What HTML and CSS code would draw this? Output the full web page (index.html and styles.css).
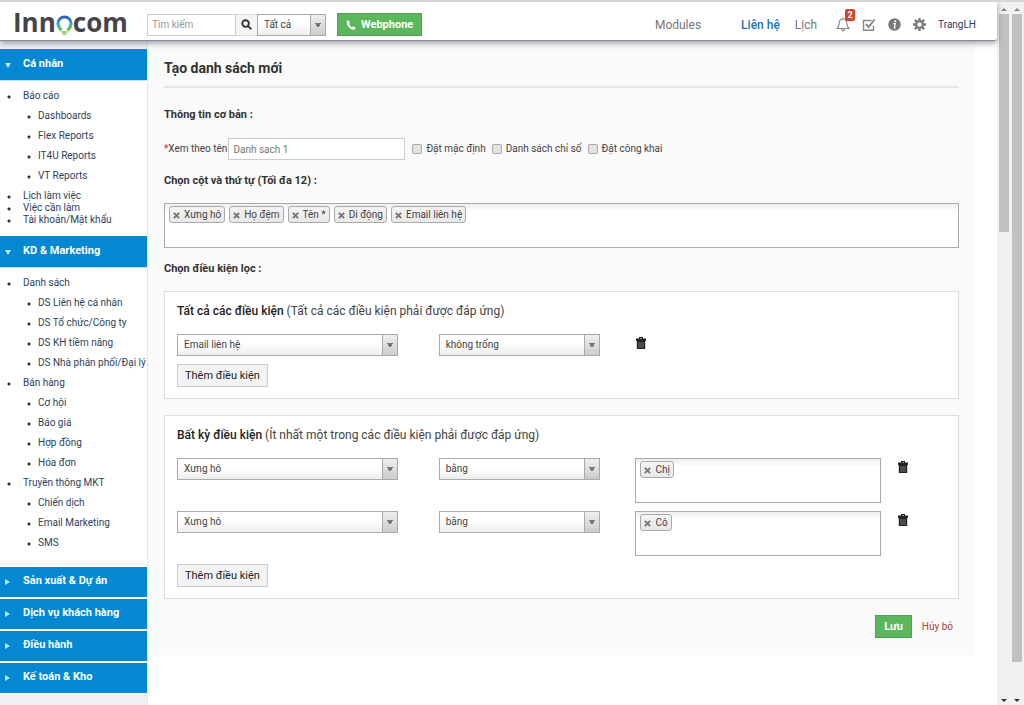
FILE: index.html
```html
<!DOCTYPE html>
<html lang="vi">
<head>
<meta charset="utf-8">
<title>Innocom - Tạo danh sách mới</title>
<link rel="stylesheet" href="styles.css">
</head>
<body>
<svg class="defs" aria-hidden="true">
  <symbol id="trash" viewBox="0 0 10 12"><path fill="#222" d="M3 0h4v1.500h3V4H0V1.500h3zM4 1v.6h2V1zM.8 3.500h8.400V12H.8z"/><path stroke="#999" stroke-width=".7" d="M3 5V11M5 5V11M7 5V11"/></symbol>
  <symbol id="x" viewBox="0 0 8 8"><path stroke="#777" stroke-width="2.300" d="M1 1l6 6M7 1L1 7"/></symbol>
</svg>
<div class="page">
  <header class="top">
    <a class="logo" href="#" aria-label="Innocom"><span>Inn</span><svg width="17" height="20" viewBox="0 0 17 20"><defs><linearGradient id="g" x2="0" y2="1"><stop stop-color="#2a62c4"/><stop offset=".5" stop-color="#39a7cf"/><stop offset="1" stop-color="#75c043"/></linearGradient></defs><path d="M5.500 15.500C4 14 2 12 2 8.500a6.500 6.500 0 0 1 13 0c0 3.500-2 5.500-3.500 7" fill="none" stroke="url(#g)" stroke-width="3"/><path d="M5.500 17h6M6.500 19.200h4" stroke="#75c043" stroke-width="1.300"/></svg><span>com</span></a>
    <form class="search">
      <input class="search-box" type="text" placeholder="Tìm kiếm" aria-label="Tìm kiếm">
      <button class="search-go" type="button" aria-label="Tìm"><svg width="11" height="11" viewBox="0 0 12 12" fill="none" stroke="#333" stroke-width="2"><circle cx="5" cy="5" r="3.600"/><path d="M7.600 7.600l3.600 3.600"/></svg></button>
      <span class="select search-scope"><select aria-label="Phạm vi"><option>Tất cả</option></select></span>
    </form>
    <button class="btn green phone" type="button"><svg width="10" height="10" viewBox="0 0 11 11"><path fill="#fff" d="M2.800.3L1 1.200C-.2 5 5 11.500 9.500 10.500l1.200-1.900-2.900-1.800-1.300 1.100C5.300 7.300 4 5.600 3.500 4.300l1-1.200z"/></svg>Webphone</button>
    <nav class="nav">
      <a class="modules" href="#">Modules</a>
      <a class="current" href="#">Liên hệ</a>
      <a class="calendar" href="#">Lịch</a>
      <button class="icon bell" type="button" aria-label="Thông báo"><svg width="14" height="15" viewBox="0 0 14 15" fill="none" stroke="#888" stroke-width="1.200"><path d="M1 11.500c2-1.500 2-3.500 2.300-6C3.500 3 5 2 7 2s3.500 1 3.700 3.500c.3 2.500.3 4.500 2.300 6zM7 2V.5M5.500 12c0 2.500 3 2.500 3 0"/></svg><span class="badge">2</span></button>
      <button class="icon" type="button" aria-label="Công việc"><svg width="14" height="14" viewBox="0 0 14 14" fill="none" stroke="#888"><path d="M11.500 7.500v4.700H1.500V2.500h8" stroke-width="1.400"/><path d="M4 6l2.600 3L12.500 1.500" stroke-width="2"/></svg></button>
      <button class="icon" type="button" aria-label="Thông tin"><svg width="13" height="13" viewBox="0 0 13 13"><circle cx="6.500" cy="6.500" r="6.200" fill="#777"/><circle cx="7.300" cy="3.300" r="1.100" fill="#fff"/><path d="M5 5.600h2.200L6.300 10H7.500" fill="none" stroke="#fff" stroke-width="1.300"/></svg></button>
      <button class="icon" type="button" aria-label="Cài đặt"><svg width="13" height="13" viewBox="0 0 13 13" fill="none" stroke="#777"><circle cx="6.500" cy="6.500" r="3.400" stroke-width="2.400"/><path stroke-width="2.400" d="M6.500 0v2M6.500 11v2M0 6.500h2M11 6.500h2M1.900 1.900l1.500 1.500M9.600 9.600l1.500 1.500M1.900 11.100l1.500-1.500M9.600 3.400l1.500-1.500"/></svg></button>
      <a class="user" href="#">TrangLH</a>
    </nav>
  </header>
  <div class="body">
    <aside class="side">
      <section>
        <h2 class="group open">Cá nhân</h2>
        <ul class="menu">
          <li><a href="#">Báo cáo</a>
            <ul><li><a href="#">Dashboards</a></li><li><a href="#">Flex Reports</a></li><li><a href="#">IT4U Reports</a></li><li><a href="#">VT Reports</a></li></ul></li>
          <li><a href="#">Lịch làm việc</a></li>
          <li><a href="#">Việc cần làm</a></li>
          <li><a href="#">Tài khoản/Mật khẩu</a></li>
        </ul>
      </section>
      <section>
        <h2 class="group open">KD &amp; Marketing</h2>
        <ul class="menu">
          <li><a href="#">Danh sách</a>
            <ul><li><a href="#">DS Liên hệ cá nhân</a></li><li><a href="#">DS Tổ chức/Công ty</a></li><li><a href="#">DS KH tiềm năng</a></li><li><a href="#">DS Nhà phân phối/Đại lý</a></li></ul></li>
          <li><a href="#">Bán hàng</a>
            <ul><li><a href="#">Cơ hội</a></li><li><a href="#">Báo giá</a></li><li><a href="#">Hợp đồng</a></li><li><a href="#">Hóa đơn</a></li></ul></li>
          <li><a href="#">Truyền thông MKT</a>
            <ul><li><a href="#">Chiến dịch</a></li><li><a href="#">Email Marketing</a></li><li><a href="#">SMS</a></li></ul></li>
        </ul>
      </section>
      <h2 class="group">Sản xuất &amp; Dự án</h2>
      <h2 class="group">Dịch vụ khách hàng</h2>
      <h2 class="group">Điều hành</h2>
      <h2 class="group">Kế toán &amp; Kho</h2>
    </aside>
    <main class="main">
      <form class="panel">
        <h1>Tạo danh sách mới</h1>
        <h3>Thông tin cơ bản :</h3>
        <div class="basic">
          <label for="name"><span class="req">*</span>Xem theo tên</label>
          <input class="name" id="name" type="text" value="Danh sach 1">
          <label class="check"><input type="checkbox">Đặt mặc định</label>
          <label class="check"><input type="checkbox">Danh sách chỉ số</label>
          <label class="check"><input type="checkbox">Đặt công khai</label>
        </div>
        <h3>Chọn cột và thứ tự (Tối đa 12) :</h3>
        <div class="tokens">
          <span class="token"><button type="button" aria-label="Xóa"><svg><use href="#x"/></svg></button>Xưng hô</span>
          <span class="token"><button type="button" aria-label="Xóa"><svg><use href="#x"/></svg></button>Họ đệm</span>
          <span class="token"><button type="button" aria-label="Xóa"><svg><use href="#x"/></svg></button>Tên *</span>
          <span class="token"><button type="button" aria-label="Xóa"><svg><use href="#x"/></svg></button>Di động</span>
          <span class="token"><button type="button" aria-label="Xóa"><svg><use href="#x"/></svg></button>Email liên hệ</span>
        </div>
        <h3>Chọn điều kiện lọc :</h3>
        <section class="card">
          <p class="lead"><b>Tất cả các điều kiện</b> (Tất cả các điều kiện phải được đáp ứng)</p>
          <div class="row">
            <span class="select"><select aria-label="Trường"><option>Email liên hệ</option></select></span>
            <span class="select op"><select aria-label="Phép so sánh"><option>không trống</option></select></span>
            <button class="del" type="button" aria-label="Xóa điều kiện"><svg><use href="#trash"/></svg></button>
          </div>
          <button class="btn add" type="button">Thêm điều kiện</button>
        </section>
        <section class="card">
          <p class="lead"><b>Bất kỳ điều kiện</b> (Ít nhất một trong các điều kiện phải được đáp ứng)</p>
          <div class="row">
            <span class="select"><select aria-label="Trường"><option>Xưng hô</option></select></span>
            <span class="select op"><select aria-label="Phép so sánh"><option>bằng</option></select></span>
            <div class="tokens"><span class="token"><button type="button" aria-label="Xóa"><svg><use href="#x"/></svg></button>Chị</span></div>
            <button class="del" type="button" aria-label="Xóa điều kiện"><svg><use href="#trash"/></svg></button>
          </div>
          <div class="row">
            <span class="select"><select aria-label="Trường"><option>Xưng hô</option></select></span>
            <span class="select op"><select aria-label="Phép so sánh"><option>bằng</option></select></span>
            <div class="tokens"><span class="token"><button type="button" aria-label="Xóa"><svg><use href="#x"/></svg></button>Cô</span></div>
            <button class="del" type="button" aria-label="Xóa điều kiện"><svg><use href="#trash"/></svg></button>
          </div>
          <button class="btn add" type="button">Thêm điều kiện</button>
        </section>
        <div class="actions"><button class="btn green" type="button">Lưu</button><a href="#">Hủy bỏ</a></div>
      </form>
    </main>
  </div>
</div>
<div class="scroll" aria-hidden="true"><i class="up"></i><div class="track"><div class="thumb inner"></div></div><i class="down"></i></div>
<div class="scroll" aria-hidden="true"><i class="up"></i><div class="track"><div class="thumb outer"></div></div><i class="down"></i></div>
</body>
</html>
```

FILE: styles.css
```css
* { box-sizing: border-box; }
body {
  margin: 0;
  display: flex;
  height: 100vh;
  overflow: hidden;
  border-top: 2px solid #d6d6d6;
  background: #fff;
  color: #444;
  font: 10px/16px Roboto, "Noto Sans", sans-serif;
}
input, select, button { font: inherit; color: inherit; margin: 0; }
button { border: 0; padding: 0; background: none; }
a { color: inherit; text-decoration: none; }
h1, h2, h3, p, ul { margin: 0; padding: 0; }
ul { list-style: none; }
.defs { display: none; }

.page { flex: 1; min-width: 0; display: flex; flex-direction: column; }
.top {
  display: flex;
  align-items: center;
  height: 39px;
  padding: 7px 21px 0 13px;
  background: #fff;
  border-bottom: 1px solid #888b94;
  border-radius: 0 0 3px 0;
  box-shadow: 0 2px 6px #555b6c99;
  position: relative;
  z-index: 1;
}
.logo {
  display: flex;
  align-items: center;
  width: 134px;
  color: #454549;
  font: 700 26px/30px "Open Sans", "Noto Sans", sans-serif;
}
.logo span { margin-bottom: 6px; }
.search { display: flex; height: 22px; }
.search-box { width: 89px; padding: 0 4px; border: 1px solid #ccc; background: #fff; }
.search-box::placeholder { color: #999; }
.search-go { width: 21px; display: grid; place-items: center; background: #f5f5f5; border: 1px solid #ddd; border-width: 1px 0; }
.search-scope { width: 69px; }

.select { display: grid; grid-template-columns: 1fr 16px; height: 22px; }
.select select {
  grid-area: 1 / 1 / 2 / 3;
  appearance: none;
  width: 100%;
  padding: 0 6px;
  border: 1px solid #aaa;
  border-radius: 0;
  background: linear-gradient(#fff 40%, #eee);
}
.select::after {
  content: "";
  grid-area: 1 / 2;
  z-index: 1;
  pointer-events: none;
  margin: 1px 1px 1px 0;
  border-left: 1px solid #aaa;
  background:
    linear-gradient(to bottom left, #777 50%, transparent 51%) 4px 8px / 3px 5px no-repeat,
    linear-gradient(to bottom right, #777 50%, transparent 51%) 7px 8px / 3px 5px no-repeat,
    linear-gradient(#eee, #ccc);
}

.btn { height: 23px; padding: 0 7px; font-size: 11px; border: 1px solid #ccc; background: #f3f3f3; color: #222; }
.green { padding: 0 8px; background: #5bb75b; border-color: #51a351; color: #fff; font-weight: 700; }
.phone { display: flex; align-items: center; gap: 5px; margin-left: 11px; }

.nav { display: flex; align-items: center; margin-left: auto; color: #777; font-size: 12px; }
.modules { margin-right: 40px; }
.current { margin-right: 15px; color: #1a73bd; font-weight: 500; }
.calendar { margin-right: 19px; }
.icon { position: relative; display: flex; margin-right: 12px; }
.badge { position: absolute; left: 9px; top: -8px; width: 10px; border-radius: 2px; background: #d2452c; color: #fff; font: 700 9px/12px Roboto, sans-serif; }
.user { color: #2c3b69; font-size: 10px; }

.body { flex: 1; display: flex; min-height: 0; }
.side { flex: 0 0 148px; min-width: 0; padding-top: 8px; background: #eef0f3; color: #2d3f60; border-right: 1px solid #e4e8ee; }
.side section { background: #fff; }
.group {
  padding: 0 0 0 23px;
  height: 30px;
  margin-bottom: 2px;
  background: #0388d1;
  color: #fff;
  box-shadow: 0 2px #fff;
  font: 700 11px/28px Roboto, sans-serif;
}
.group::before {
  content: "";
  float: left;
  margin: 12px 0 0 -18px;
  border: solid transparent;
  border-width: 3px 0 3px 5px;
  border-left-color: #bfe6fa;
}
.group.open { height: 31px; margin: 0; box-shadow: 0 1px #b3e5fc; line-height: 30px; }
.group.open::before { margin-top: 14px; border-width: 5px 3px 0; border-color: #bfe6fa transparent; }
.menu { padding: 10px 0; line-height: 12px; }
.menu li { padding-left: 23px; background: radial-gradient(circle, #333 1px, transparent 2px) 7px 5px / 4px 4px no-repeat; }
.menu ul { margin: 4px 0 4px -23px; line-height: 20px; }
.menu ul li { padding-left: 38px; background-position: 27px 9px; white-space: nowrap; }

.main { flex: 1; min-width: 0; padding-right: 22px; }
.panel { padding: 17px 16px; background: #fafafa; }
h1 { padding: 0 0 8px; margin-bottom: 19px; border-bottom: 2px solid #e6e6e6; font: 700 14px/20px Roboto, sans-serif; color: #333; }
h3 { font: 700 11px/16px Roboto, sans-serif; color: #333; }
.basic { display: flex; align-items: center; margin: 15px 0 13px; }
.req { color: #e22; }
.name { width: 177px; height: 22px; margin: 0 7px 0 1px; padding: 0 4px; border: 1px solid #ccc; background: #fff; color: #777; }
.check { display: flex; align-items: center; margin-right: 6px; }
.check input { appearance: none; width: 10px; height: 10px; margin-right: 4px; border: 1px solid #aaa; border-radius: 2px; background: #e4e4e4; }
.tokens { display: flex; align-items: flex-start; gap: 4px; min-height: 45px; padding: 2px 4px; border: 1px solid #aaa; background: linear-gradient(#eee, #fff 8px); }
.panel > .tokens { margin: 14px 0 13px; }
.token { display: flex; align-items: center; height: 17px; padding: 0 3px; border: 1px solid #aaa; border-radius: 3px; background: linear-gradient(#f4f4f4, #e8e8e8); }
.token button { display: flex; margin: 2px 4px 0 0; }
.token svg { width: 7px; height: 7px; }
.card { margin: 14px 0 16px; padding: 11px 12px; border: 1px solid #ddd; background: #fff; }
.lead { margin-bottom: 15px; font-size: 12px; }
.lead b { font-weight: 500; color: #222; }
.row { display: grid; grid-template-columns: 262fr 197fr 262fr 49fr; align-items: start; margin-bottom: 8px; }
.row .select { margin-right: 41px; }
.row .select.op { margin-right: 35px; }
.row .tokens { margin-right: 16px; }
.del { justify-self: start; margin: 3px 0 0 1px; display: flex; }
.del svg { width: 10px; height: 12px; }
.add { display: block; }
.actions { display: flex; align-items: center; gap: 10px; justify-content: flex-end; padding-right: 6px; }
.actions a { color: #a94442; }

.scroll { flex: 0 0 13px; display: flex; flex-direction: column; align-items: center; background: #f1f1f1; }
.scroll:last-child { flex-basis: 14px; }
.track { flex: 1; width: 10px; }
.scroll .thumb { background: #c1c1c1; }
.inner { height: 32%; }
.outer { height: 95%; }
.up, .down { margin: 6px 0 3px; border: 3px solid transparent; border-top: 0; border-bottom-color: #888; }
.down { border: 3px solid transparent; border-bottom: 0; border-top-color: #333; margin: 3px 0; }
```
